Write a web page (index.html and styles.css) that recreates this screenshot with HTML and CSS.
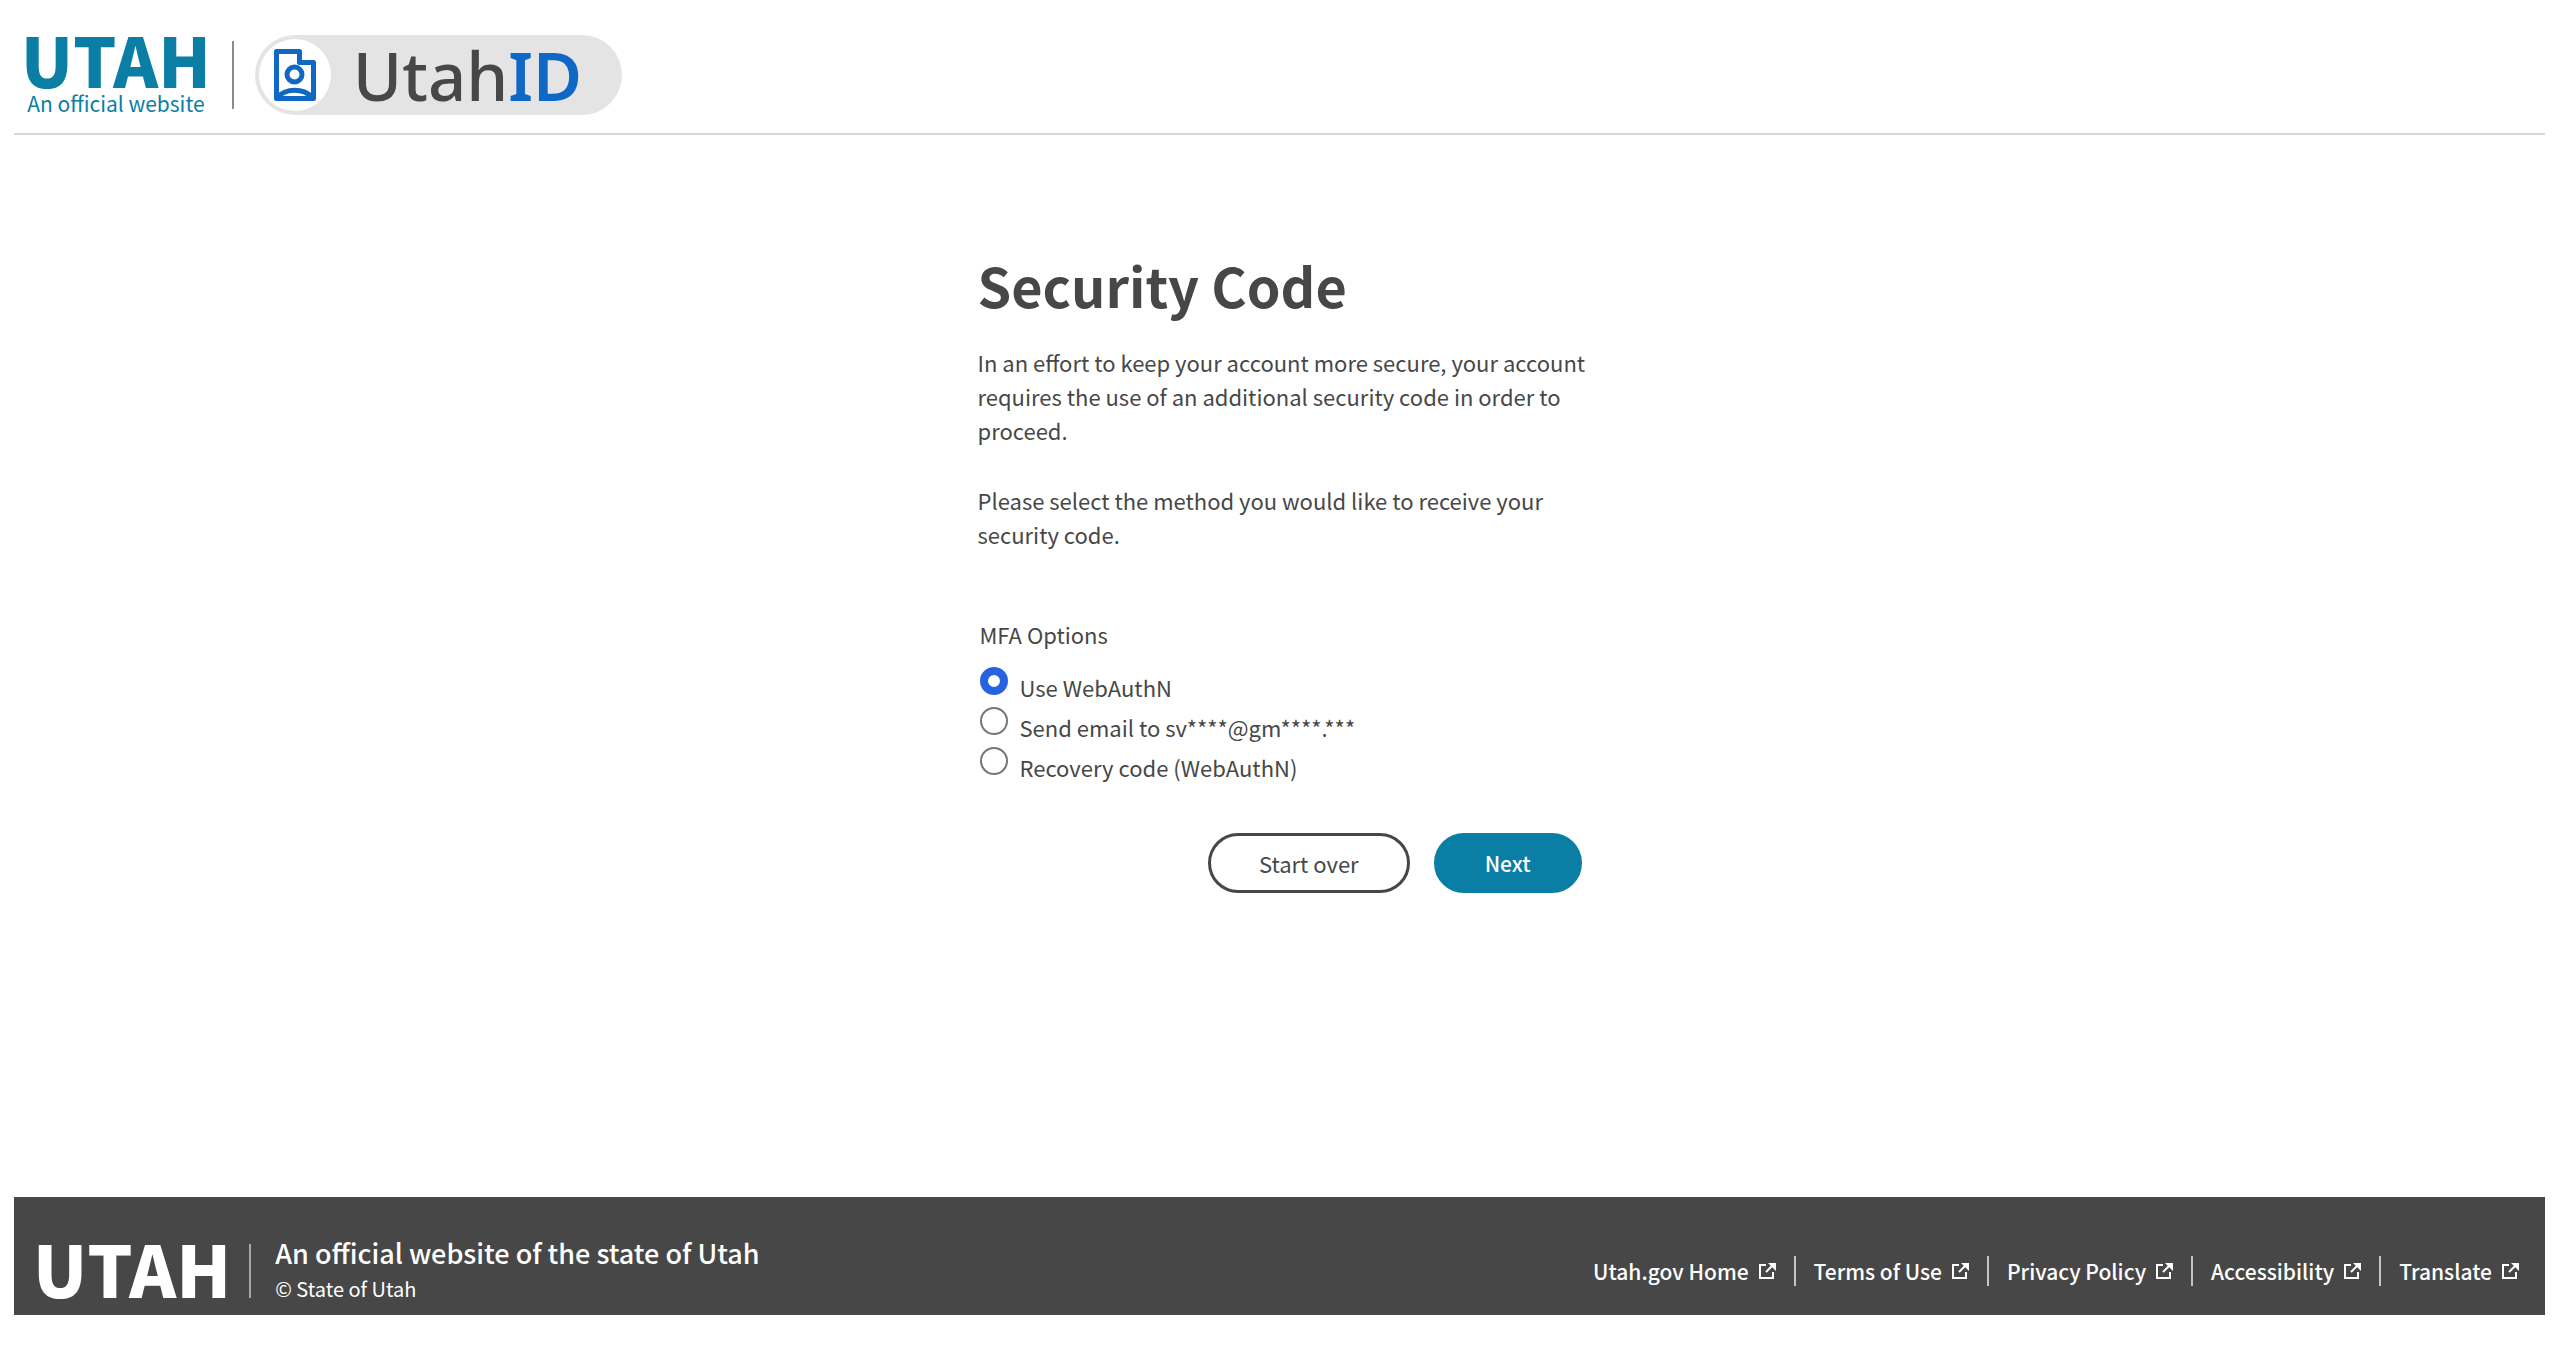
FILE: index.html
```html
<!DOCTYPE html>
<html lang="en">
<head>
    <meta charset="UTF-8">
    <meta name="viewport" content="width=device-width, initial-scale=1.0">
    <title>Security Code - UtahID</title>
    <link rel="stylesheet" href="styles.css">
</head>
<body>
    <!-- Header -->
    <header class="header">
        <a class="utah-logo" href="#">
            <span class="utah-name">UTAH</span>
            <span class="utah-tagline">An official website</span>
        </a>
        <div class="header-divider"></div>
        <a class="id-logo" href="#">
            <span class="id-circle">
                <svg class="id-icon" viewBox="0 0 42 52" fill="none" stroke="#0f68c6" stroke-width="5" stroke-linejoin="round">
                    <path d="M2.5 2.5H25.5V13.5H39.5V49.5H2.5Z"/>
                    <circle cx="20.5" cy="25.5" r="7.5"/>
                    <path d="M4 48C12 39 29 39 38 48"/>
                </svg>
            </span>
            <span class="id-name">Utah<b>ID</b></span>
        </a>
    </header>

    <!-- Security code form -->
    <main class="main">
        <form class="code-form">
            <h1 class="title">Security Code</h1>
            <p class="text">In an effort to keep your account more secure, your account requires the use of an additional security code in order to proceed.</p>
            <p class="text">Please select the method you would like to receive your security code.</p>

            <fieldset class="options">
                <legend class="legend">MFA Options</legend>
                <div class="option">
                    <input type="radio" name="mfa" id="webauthn" checked>
                    <label for="webauthn">Use WebAuthN</label>
                </div>
                <div class="option">
                    <input type="radio" name="mfa" id="email">
                    <label for="email">Send email to sv****@gm****.***</label>
                </div>
                <div class="option">
                    <input type="radio" name="mfa" id="recovery">
                    <label for="recovery">Recovery code (WebAuthN)</label>
                </div>
            </fieldset>

            <div class="buttons">
                <button class="btn btn-outline" type="button">Start over</button>
                <button class="btn btn-primary" type="submit">Next</button>
            </div>
        </form>
    </main>

    <!-- Footer -->
    <footer class="footer">
        <div class="footer-brand">
            <span class="footer-logo">UTAH</span>
            <div class="footer-info">
                <p class="footer-title">An official website of the state of Utah</p>
                <p class="footer-copy">© State of Utah</p>
            </div>
        </div>
        <nav class="footer-links">
            <a href="#">Utah.gov Home <svg class="ext" viewBox="0 0 17 16"><use href="#ext"/></svg></a>
            <a href="#">Terms of Use <svg class="ext" viewBox="0 0 17 16"><use href="#ext"/></svg></a>
            <a href="#">Privacy Policy <svg class="ext" viewBox="0 0 17 16"><use href="#ext"/></svg></a>
            <a href="#">Accessibility <svg class="ext" viewBox="0 0 17 16"><use href="#ext"/></svg></a>
            <a href="#">Translate <svg class="ext" viewBox="0 0 17 16"><use href="#ext"/></svg></a>
        </nav>
    </footer>

    <!-- External link icon -->
    <svg class="sprite" width="0" height="0">
        <symbol id="ext" viewBox="0 0 17 16">
            <path d="M7 2H1V15H14V9M7 9L14 2" fill="none" stroke="#fff" stroke-width="2"/>
            <path d="M9 0H17V8Z" fill="#fff"/>
        </symbol>
    </svg>
</body>
</html>
```
FILE: styles.css
```css
/* Basic reset */
* {
    margin: 0;
    padding: 0;
    box-sizing: border-box;
}

/* Body styling */
body {
    font-family: 'Noto Sans CJK SC', 'Noto Sans', sans-serif;
    font-size: 22px;
    line-height: 34px;
    color: #474747;
    background-color: #fff;
    min-height: 100vh;
    padding: 0 15px 34px 14px;
    display: flex;
    flex-direction: column;
}

a {
    color: inherit;
    text-decoration: none;
}

/* Header */
.header {
    display: flex;
    align-items: center;
    gap: 21px;
    height: 135px;
    padding: 16px 7px 0;
    border-bottom: 2px solid #d8d8d8;
}

.utah-logo {
    display: flex;
    flex-direction: column;
    align-items: center;
    color: #0a7ea4;
}

.utah-name {
    font-size: 68px;
    font-weight: 900;
    line-height: 56px;
}

.utah-tagline {
    font-size: 21px;
    line-height: 32px;
}

.header-divider {
    width: 2px;
    height: 68px;
    background: #8c8c8c;
}

.id-logo {
    display: flex;
    align-items: center;
    gap: 22px;
    height: 80px;
    padding: 0 40px 0 4px;
    border-radius: 40px;
    background: #e4e4e4;
}

.id-circle {
    display: flex;
    align-items: center;
    justify-content: center;
    width: 72px;
    height: 72px;
    border-radius: 50%;
    background: #fff;
}

.id-icon {
    width: 42px;
    height: 52px;
}

.id-name {
    font-family: 'Noto Sans', sans-serif;
    font-size: 67px;
    font-weight: 500;
    line-height: 80px;
}

.id-name b {
    color: #0f68c6;
    font-weight: 600;
}

/* Form */
.main {
    flex: 1;
    padding-top: 114px;
}

.code-form {
    width: 604px;
    margin: 0 auto;
}

.title {
    font-size: 54px;
    line-height: 72px;
    margin-bottom: 24px;
}

.text {
    margin: 0 -10px 36px 0;
}

.options {
    border: none;
    padding: 0 2px;
    margin: 66px 0 46px;
}

.legend {
    margin-bottom: 16px;
}

.option {
    display: flex;
    gap: 12px;
    height: 40px;
    line-height: 40px;
}

.option input {
    appearance: none;
    width: 28px;
    height: 28px;
    border: 2px solid #767676;
    border-radius: 50%;
    background: #fff;
}

.option input:checked {
    border: 8px solid #2563e0;
}

/* Buttons */
.buttons {
    display: flex;
    justify-content: flex-end;
    gap: 24px;
}

.btn {
    height: 60px;
    padding: 0 48px;
    border: 3px solid #474747;
    border-radius: 30px;
    background: #fff;
    color: #474747;
    font: inherit;
    cursor: pointer;
}

.btn-primary {
    background: #0a7ea4;
    border-color: #0a7ea4;
    color: #fff;
    font-size: 21px;
    font-weight: 500;
}

/* Footer */
.footer {
    display: flex;
    justify-content: space-between;
    align-items: center;
    height: 118px;
    padding: 30px 26px 0 19px;
    background: #474747;
    color: #fff;
}

.footer-brand {
    display: flex;
    align-items: center;
    gap: 24px;
}

.footer-logo {
    font-size: 71px;
    font-weight: 900;
    line-height: 46px;
    padding: 0 18px 8px 0;
    border-right: 2px solid #a8a8a8;
}

.footer-info {
    display: flex;
    flex-direction: column;
    gap: 2px;
}

.footer-title {
    font-size: 27px;
    font-weight: 500;
}

.footer-copy {
    font-size: 20px;
}

.footer-links {
    display: flex;
    font-size: 21px;
    font-weight: 500;
}

.footer-links a {
    display: flex;
    align-items: center;
    gap: 10px;
    line-height: 30px;
    padding: 0 18px;
    border-left: 2px solid #c4c4c4;
}

.footer-links a:first-child {
    border-left: none;
}

.footer-links a:last-child {
    padding-right: 0;
}

.ext {
    width: 17px;
    height: 16px;
}

.sprite {
    position: absolute;
}
```
